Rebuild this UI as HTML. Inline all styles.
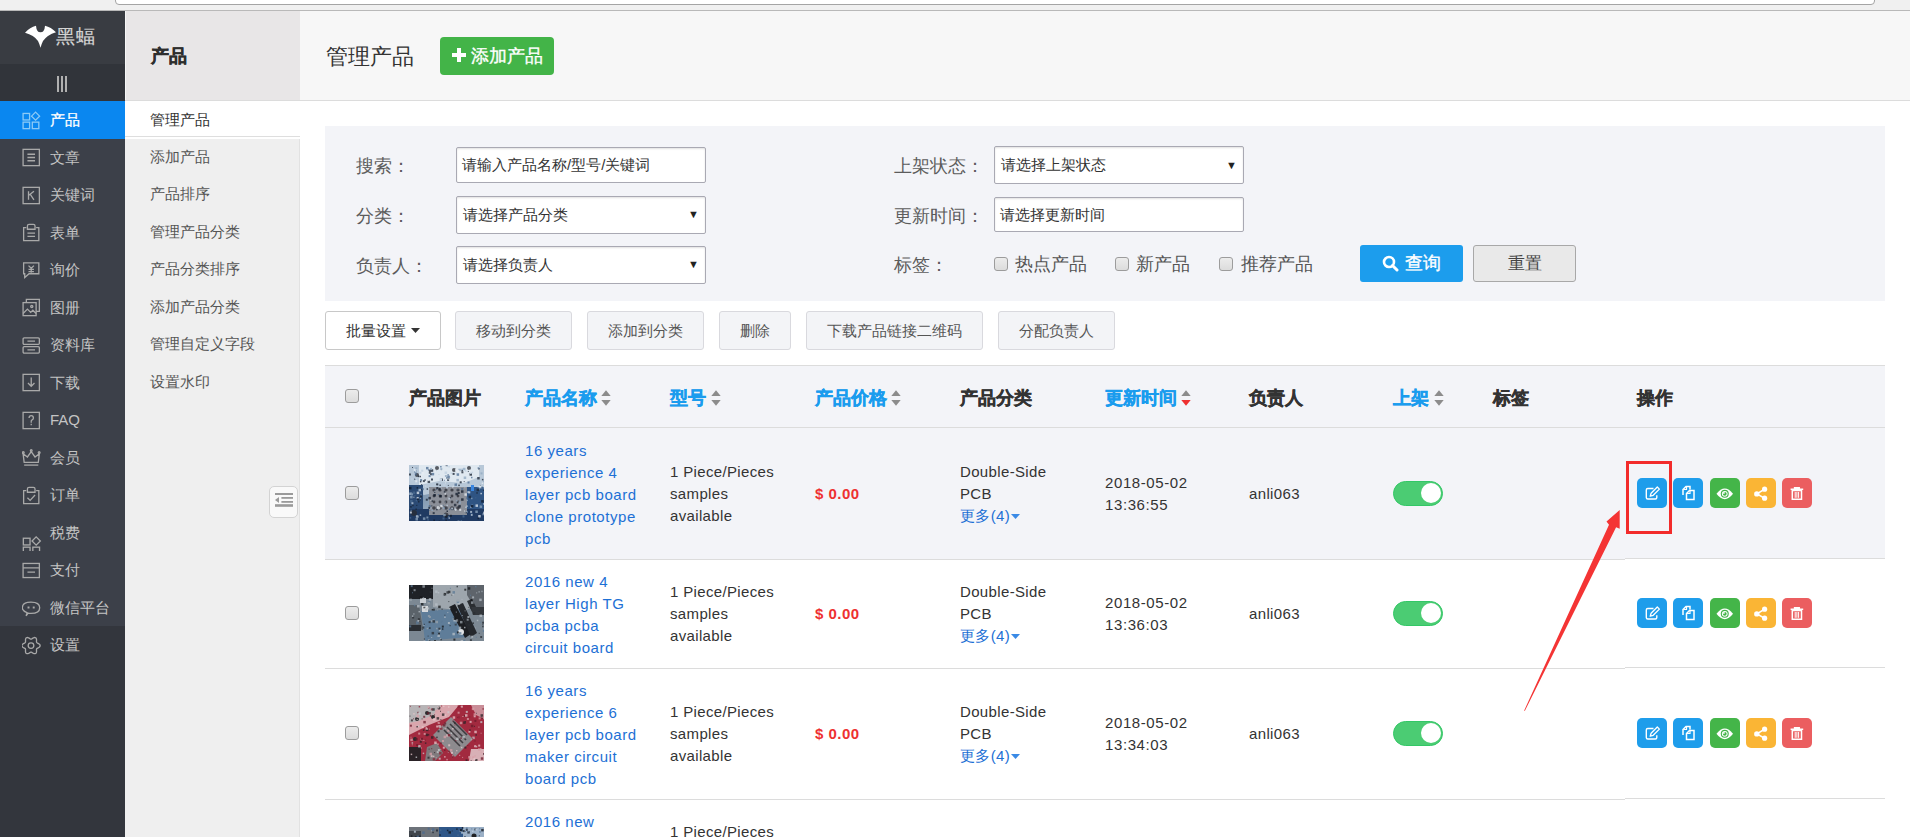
<!DOCTYPE html>
<html><head><meta charset="utf-8">
<style>
*{box-sizing:border-box;margin:0;padding:0}
html,body{width:1910px;height:837px;overflow:hidden;background:#fff;font-family:"Liberation Sans",sans-serif;color:#333}
.abs{position:absolute}
#topbar{left:0;top:0;width:1910px;height:10px;background:#f0f0f0}
#topinput{left:115px;top:-6px;width:1760px;height:11px;background:#fff;border:1px solid #a4a4a4;border-radius:0 0 4px 4px}
#topline{left:0;top:10px;width:1910px;height:1px;background:#b9b9b9}
#side{left:0;top:11px;width:125px;height:826px;background:#33363d}
#logo{left:0;top:11px;width:125px;height:53px;background:#393c42}
#tog{left:0;top:64px;width:125px;height:37px;background:#31343a}
#menu{left:0;top:101px;width:125px;height:525px;background:#3c4049}
.mi{position:absolute;left:0;width:125px;height:37.5px;overflow:hidden;color:#c4c4c4;font-size:15px;line-height:37.5px}
.mi span{position:absolute;left:50px;top:0}
.mi svg{position:absolute;left:22px;top:9.5px;color:#a9a9a9}
.mi.act svg{color:#8ccaf6}
.mi.act{background:#0a87f0;color:#fff;-webkit-text-stroke:.3px}
#sub{left:125px;top:11px;width:175px;height:826px;background:#efefef;border-right:1px solid #e2e2e2}
#subhead{left:125px;top:11px;width:175px;height:89px;background:#e8e6e7;border-left:1px solid #f6f6f6}
#subhead b{position:absolute;left:24.5px;top:33.5px;font-size:17.5px;line-height:22px;color:#2e2e2e;-webkit-text-stroke:.4px}
#mainhead{left:300px;top:11px;width:1610px;height:89px;background:#f7f7f7}
#headline{left:125px;top:100px;width:1785px;height:1px;background:#dcdcdc}
#mainwhite{left:300px;top:101px;width:1610px;height:736px;background:#fff}
.si{position:absolute;left:125px;width:175px;height:37.5px;font-size:15px;line-height:37.5px;color:#555;padding-left:25px}
.si.act{background:#fff;color:#333;width:176px}
#subline{left:125px;top:136px;width:175px;height:1px;background:#dedede}

.lbl{position:absolute;font-size:17.5px;line-height:24px;color:#5c5c5c}
.inp{position:absolute;width:250px;height:36px;background:#fff;border:1px solid #a9a9b3;border-radius:2px;box-shadow:inset 0 1px 2px rgba(0,0,0,.12);font-size:15px;line-height:34px;padding-left:5px;color:#333}
.inp i{position:absolute;right:6px;top:0;font-style:normal;font-size:11px;color:#222}
.cb{position:absolute;width:14px;height:14px;border:1px solid #9c9c9c;border-radius:3px;background:linear-gradient(#ececec,#dcdcdc)}
.cbl{position:absolute;font-size:17.5px;line-height:24px;color:#555}
.bb{position:absolute;top:311px;height:39px;border:1px solid #d9d9de;border-radius:3px;background:#f3f4f7;font-size:15px;line-height:37px;text-align:center;color:#555}

.th{position:absolute;top:386px;font-size:17.5px;line-height:24px;font-weight:bold;color:#333;-webkit-text-stroke:.45px}
.th.bl{color:#1a9cee}
.srt{position:absolute;top:390px}
.tl.tm{letter-spacing:.6px}
.tl{position:absolute;font-size:15px;line-height:22px;color:#333;letter-spacing:.35px;white-space:nowrap}
.nm{color:#1d70d5;letter-spacing:.55px;margin-top:1px}
.pr{position:absolute;font-size:15px;line-height:22px;color:#ee3131;font-weight:bold;letter-spacing:.5px}
.more{color:#1d70d5}
.tg{position:absolute;left:1393px;width:50px;height:25px;border-radius:13px;background:#4bcc73;border:1.5px solid #33c766}
.tg:after{content:"";position:absolute;right:1px;top:1px;width:20px;height:20px;border-radius:50%;background:#fff}
.ab{position:absolute;width:30px;height:30px;border-radius:5px}
.ab svg{position:absolute;left:0;top:0}
.rowline{position:absolute;left:325px;width:1560px;height:1px;background:#dcdcdc}
.pic{position:absolute;left:409px;width:75px;height:56px}
</style></head><body>
<div class="abs" id="topbar"></div>
<div class="abs" id="topinput"></div>
<div class="abs" id="topline"></div>

<div class="abs" id="side"></div>
<div class="abs" id="logo"></div>
<div class="abs" id="tog"></div>
<div class="abs" id="menu"></div>
<div class="abs" style="left:25px;top:24px"><svg width="32" height="25" viewBox="0 0 32 25"><path fill="#fff" d="M0 8.7 Q5 3 11 1.7 Q11.5 8.3 15.5 8.3 Q19.5 8.3 20 1.7 Q26 3 31 8.2 Q22 11 18 17 Q16.5 20 15.5 23.7 Q14.5 20 13 17 Q9 11 0 8.7Z"/></svg></div>
<div class="abs" style="left:56px;top:24.5px;font-size:18.5px;line-height:24px;color:#d4d4d4;letter-spacing:.5px;-webkit-text-stroke:.2px">黑蝠</div>
<div class="abs" style="left:57px;top:76px;width:1.6px;height:16px;background:#b0b0b0"></div>
<div class="abs" style="left:61px;top:76px;width:1.6px;height:16px;background:#b0b0b0"></div>
<div class="abs" style="left:65px;top:76px;width:1.6px;height:16px;background:#b0b0b0"></div>
<div class="mi act" style="top:101.0px"><svg width="19" height="19" viewBox="0 0 17.5 17"><g fill="none" stroke="currentColor" stroke-width="1.2"><rect x="1" y="2" width="6" height="6"/><path d="M12.5 0.8 L16.2 4.5 L12.5 8.2 L8.8 4.5Z"/><rect x="1" y="10" width="6" height="6"/><rect x="9.5" y="10" width="6" height="6"/></g></svg><span>产品</span></div>
<div class="mi" style="top:138.5px"><svg width="19" height="19" viewBox="0 0 17.5 17"><g fill="none" stroke="currentColor" stroke-width="1.2"><rect x="1" y="1" width="15" height="15"/><path d="M5 5.5h7M5 8.5h7M5 11.5h7"/></g></svg><span>文章</span></div>
<div class="mi" style="top:176.0px"><svg width="19" height="19" viewBox="0 0 17.5 17"><g fill="none" stroke="currentColor" stroke-width="1.2"><rect x="1" y="1" width="15" height="15"/><path d="M6 4.5v8M6 8.5l5-4M7.5 7.3l3.5 5.2"/></g></svg><span>关键词</span></div>
<div class="mi" style="top:213.5px"><svg width="19" height="19" viewBox="0 0 17.5 17"><g fill="none" stroke="currentColor" stroke-width="1.2"><path d="M4 4H1.5v12h14V4H13"/><path d="M5 5.5V2.5q0-1.5 1.5-1.5h4q1.5 0 1.5 1.5v3z"/><path d="M5 9h7M5 12h7"/></g></svg><span>表单</span></div>
<div class="mi" style="top:251.0px"><svg width="19" height="19" viewBox="0 0 17.5 17"><g fill="none" stroke="currentColor" stroke-width="1.2"><path d="M1.5 1.5h14v10h-9l-4 3.5v-3.5h-1z"/><path d="M6 4l2.5 2.5L11 4M8.5 6.5v4M6 7.5h5M6 9.5h5"/></g></svg><span>询价</span></div>
<div class="mi" style="top:288.5px"><svg width="19" height="19" viewBox="0 0 17.5 17"><g fill="none" stroke="currentColor" stroke-width="1.2"><path d="M4 4V1h12v11h-3"/><rect x="1" y="4" width="12" height="12"/><path d="M1 14l4-4 3 3 2-2 3 3"/><circle cx="9" cy="7.5" r="1"/></g></svg><span>图册</span></div>
<div class="mi" style="top:326.0px"><svg width="19" height="19" viewBox="0 0 17.5 17"><g fill="none" stroke="currentColor" stroke-width="1.2"><rect x="1" y="1.5" width="15" height="6" rx="1"/><rect x="1" y="9.5" width="15" height="6" rx="1"/><path d="M5 4.5h7M5 12.5h7"/></g></svg><span>资料库</span></div>
<div class="mi" style="top:363.5px"><svg width="19" height="19" viewBox="0 0 17.5 17"><g fill="none" stroke="currentColor" stroke-width="1.2"><rect x="1" y="1" width="15" height="15"/><path d="M8.5 4v8M5.5 9l3 3 3-3"/></g></svg><span>下载</span></div>
<div class="mi" style="top:401.0px"><svg width="19" height="19" viewBox="0 0 17.5 17"><g fill="none" stroke="currentColor" stroke-width="1.2"><rect x="1" y="1" width="15" height="15"/><path d="M6.5 6.3q0-2.3 2-2.3t2 2.1q0 1.2-1.2 1.8t-.8 1.8v.8M8.5 11.5v1.3"/></g></svg><span>FAQ</span></div>
<div class="mi" style="top:438.5px"><svg width="19" height="19" viewBox="0 0 17.5 17"><g fill="none" stroke="currentColor" stroke-width="1.2"><path d="M2 13L1 5l4 3 3.5-5 3.5 5 4-3-1 8z"/><path d="M2 15.5h13"/><circle cx="1.2" cy="4" r=".8"/><circle cx="8.5" cy="2" r=".8"/><circle cx="15.8" cy="4" r=".8"/></g></svg><span>会员</span></div>
<div class="mi" style="top:476.0px"><svg width="19" height="19" viewBox="0 0 17.5 17"><g fill="none" stroke="currentColor" stroke-width="1.2"><path d="M4 4H1.5v12h14V4H13"/><path d="M5 5.5V2.5q0-1.5 1.5-1.5h4q1.5 0 1.5 1.5v3z"/><path d="M5 10.5l2.5 2.5 4.5-5"/></g></svg><span>订单</span></div>
<div class="mi" style="top:513.5px"><svg width="20" height="19" viewBox="0 0 17.5 17" style="top:22px"><g fill="none" stroke="currentColor" stroke-width="1.2"><rect x="1" y="2" width="6" height="6"/><path d="M12.5 0.8 L16.2 4.5 L12.5 8.2 L8.8 4.5Z"/><rect x="1" y="10" width="6" height="6"/><rect x="9.5" y="10" width="6" height="6"/></g></svg><span>税费</span></div>
<div class="mi" style="top:551.0px"><svg width="19" height="19" viewBox="0 0 17.5 17"><g fill="none" stroke="currentColor" stroke-width="1.2"><rect x="1" y="2" width="15" height="13"/><path d="M1 6h15M5 10h7"/></g></svg><span>支付</span></div>
<div class="mi" style="top:588.5px"><svg width="19" height="19" viewBox="0 0 17.5 17"><g fill="none" stroke="currentColor" stroke-width="1.2"><path d="M3.8 16.3 L4.6 13.2 Q0.3 11.6 0.3 8.8 Q0.3 3.6 8.3 3.6 Q16.3 3.6 16.3 8.8 Q16.3 14 8.3 14 Q6.8 14 5.6 13.7 Z"/><rect x="5.1" y="7.6" width="1.8" height="1.8" fill="currentColor" stroke="none"/><rect x="9.9" y="7.6" width="1.8" height="1.8" fill="currentColor" stroke="none"/></g></svg><span>微信平台</span></div>
<div class="mi" style="top:626.0px"><svg width="19" height="19" viewBox="0 0 17.5 17"><g fill="none" stroke="currentColor" stroke-width="1.2"><path d="M8.30 2.60 L8.62 2.55 L8.95 2.40 L9.32 2.19 L9.72 1.92 L10.16 1.65 L10.64 1.40 L11.13 1.22 L11.62 1.14 L12.09 1.17 L12.50 1.33 L12.84 1.60 L13.10 1.99 L13.27 2.46 L13.37 2.97 L13.39 3.51 L13.38 4.03 L13.35 4.51 L13.34 4.94 L13.38 5.30 L13.50 5.60 L13.70 5.85 L13.99 6.07 L14.36 6.27 L14.79 6.49 L15.25 6.74 L15.71 7.03 L16.11 7.36 L16.43 7.75 L16.63 8.16 L16.70 8.60 L16.63 9.04 L16.43 9.45 L16.11 9.84 L15.71 10.17 L15.25 10.46 L14.79 10.71 L14.36 10.93 L13.99 11.13 L13.70 11.35 L13.50 11.60 L13.38 11.90 L13.34 12.26 L13.35 12.69 L13.38 13.17 L13.39 13.69 L13.37 14.23 L13.27 14.74 L13.10 15.21 L12.84 15.60 L12.50 15.87 L12.09 16.03 L11.62 16.06 L11.13 15.98 L10.64 15.80 L10.16 15.55 L9.72 15.28 L9.32 15.01 L8.95 14.80 L8.62 14.65 L8.30 14.60 L7.98 14.65 L7.65 14.80 L7.28 15.01 L6.88 15.28 L6.44 15.55 L5.96 15.80 L5.47 15.98 L4.98 16.06 L4.51 16.03 L4.10 15.87 L3.76 15.60 L3.50 15.21 L3.33 14.74 L3.23 14.23 L3.21 13.69 L3.22 13.17 L3.25 12.69 L3.26 12.26 L3.22 11.90 L3.10 11.60 L2.90 11.35 L2.61 11.13 L2.24 10.93 L1.81 10.71 L1.35 10.46 L0.89 10.17 L0.49 9.84 L0.17 9.45 L-0.03 9.04 L-0.10 8.60 L-0.03 8.16 L0.17 7.75 L0.49 7.36 L0.89 7.03 L1.35 6.74 L1.81 6.49 L2.24 6.27 L2.61 6.07 L2.90 5.85 L3.10 5.60 L3.22 5.30 L3.26 4.94 L3.25 4.51 L3.22 4.03 L3.21 3.51 L3.23 2.97 L3.33 2.46 L3.50 1.99 L3.76 1.60 L4.10 1.33 L4.51 1.17 L4.98 1.14 L5.47 1.22 L5.96 1.40 L6.44 1.65 L6.88 1.92 L7.28 2.19 L7.65 2.40 L7.98 2.55 L8.30 2.60Z"/><circle cx="8.3" cy="8.6" r="2.6"/></g></svg><span>设置</span></div>

<div class="abs" id="sub"></div>
<div class="abs" id="subhead"><b>产品</b></div>
<div class="abs" id="mainhead"></div>
<div class="abs" id="mainwhite"></div>
<div class="abs" id="headline"></div>

<div class="si act" style="top:101px">管理产品</div>
<div class="abs" id="subline"></div>
<div class="si" style="top:137.5px">添加产品</div>
<div class="si" style="top:175px">产品排序</div>
<div class="si" style="top:212.5px">管理产品分类</div>
<div class="si" style="top:250px">产品分类排序</div>
<div class="si" style="top:287.5px">添加产品分类</div>
<div class="si" style="top:325px">管理自定义字段</div>
<div class="si" style="top:362.5px">设置水印</div>


<div class="abs" style="left:326px;top:43px;font-size:22px;line-height:28px;color:#333">管理产品</div>
<div class="abs" style="left:440px;top:37px;width:114px;height:38px;background:#43b448;border-radius:4px"></div>
<div class="abs" style="left:452px;top:48px"><svg width="14" height="14" viewBox="0 0 14 14"><path fill="#fff" d="M5 0h4v5h5v4H9v5H5V9H0V5h5z"/></svg></div>
<div class="abs" style="left:471px;top:44px;font-size:18px;line-height:24px;color:#fff;-webkit-text-stroke:.35px">添加产品</div>

<div class="abs" style="left:325px;top:126px;width:1560px;height:175px;background:#f3f4f8"></div>
<div class="lbl" style="left:356px;top:154px">搜索：</div>
<div class="lbl" style="left:356px;top:204px">分类：</div>
<div class="lbl" style="left:356px;top:254px">负责人：</div>
<div class="inp" style="left:456px;top:147px;height:36px">请输入产品名称/型号/关键词</div>
<div class="inp" style="left:456px;top:196px;height:37.5px;line-height:35.5px;padding-left:6px">请选择产品分类<i>▼</i></div>
<div class="inp" style="left:456px;top:246px;height:37.5px;line-height:35.5px;padding-left:6px">请选择负责人<i>▼</i></div>
<div class="lbl" style="left:894px;top:154px">上架状态：</div>
<div class="lbl" style="left:894px;top:204px">更新时间：</div>
<div class="lbl" style="left:894px;top:253px">标签：</div>
<div class="inp" style="left:994px;top:146px;height:38px;line-height:36px;padding-left:6px">请选择上架状态<i>▼</i></div>
<div class="inp" style="left:994px;top:197px;height:35px;line-height:33px">请选择更新时间</div>
<div class="cb" style="left:994px;top:257px"></div><div class="cbl" style="left:1015px;top:252px">热点产品</div>
<div class="cb" style="left:1115px;top:257px"></div><div class="cbl" style="left:1136px;top:252px">新产品</div>
<div class="cb" style="left:1219px;top:257px"></div><div class="cbl" style="left:1241px;top:252px">推荐产品</div>
<div class="abs" style="left:1360px;top:245px;width:103px;height:37px;background:#1c9ded;border-radius:3px"></div>
<div class="abs" style="left:1382px;top:255px"><svg width="17" height="17" viewBox="0 0 17 17"><circle cx="7" cy="7" r="5" fill="none" stroke="#fff" stroke-width="2.6"/><path d="M10.5 10.5l4.5 4.5" stroke="#fff" stroke-width="3" stroke-linecap="round"/></svg></div>
<div class="abs" style="left:1405px;top:251px;font-size:18px;line-height:24px;color:#fff;-webkit-text-stroke:.35px">查询</div>
<div class="abs" style="left:1473px;top:245px;width:103px;height:37px;background:#e9e9e9;border:1px solid #a8a8a8;border-radius:3px;font-size:17px;line-height:35px;text-align:center;color:#444">重置</div>

<div class="bb" style="left:325px;width:116px;background:#fff;border-color:#c8c8c8;color:#333">批量设置 <svg width="9" height="6" viewBox="0 0 9 6" style="vertical-align:2px"><path d="M0 0h9L4.5 5z" fill="#333"/></svg></div>
<div class="bb" style="left:455px;width:117px">移动到分类</div>
<div class="bb" style="left:587px;width:117px">添加到分类</div>
<div class="bb" style="left:719px;width:72px">删除</div>
<div class="bb" style="left:806px;width:177px">下载产品链接二维码</div>
<div class="bb" style="left:998px;width:117px">分配负责人</div>

<div class="abs" style="left:325px;top:365px;width:1560px;height:63px;background:#f3f4f8;border-top:1px solid #dcdcdc;border-bottom:1px solid #dcdcdc"></div>
<div class="cb" style="left:345px;top:389px"></div>
<div class="th" style="left:409px">产品图片</div>
<div class="th bl" style="left:525px">产品名称</div><svg class="srt" style="left:600.5px" width="10" height="16" viewBox="0 0 10 16"><path d="M0.3 6L5 0.3 9.7 6z" fill="#8c8c8c"/><path d="M0.3 10L5 15.7 9.7 10z" fill="#8c8c8c"/></svg>
<div class="th bl" style="left:670px">型号</div><svg class="srt" style="left:711px" width="10" height="16" viewBox="0 0 10 16"><path d="M0.3 6L5 0.3 9.7 6z" fill="#8c8c8c"/><path d="M0.3 10L5 15.7 9.7 10z" fill="#8c8c8c"/></svg>
<div class="th bl" style="left:815px">产品价格</div><svg class="srt" style="left:891px" width="10" height="16" viewBox="0 0 10 16"><path d="M0.3 6L5 0.3 9.7 6z" fill="#8c8c8c"/><path d="M0.3 10L5 15.7 9.7 10z" fill="#8c8c8c"/></svg>
<div class="th" style="left:960px">产品分类</div>
<div class="th bl" style="left:1105px">更新时间</div><svg class="srt" style="left:1181px" width="10" height="16" viewBox="0 0 10 16"><path d="M0.3 6L5 0.3 9.7 6z" fill="#8c8c8c"/><path d="M0.3 10L5 15.7 9.7 10z" fill="#ee3030"/></svg>
<div class="th" style="left:1249px">负责人</div>
<div class="th bl" style="left:1393px">上架</div><svg class="srt" style="left:1433.5px" width="10" height="16" viewBox="0 0 10 16"><path d="M0.3 6L5 0.3 9.7 6z" fill="#8c8c8c"/><path d="M0.3 10L5 15.7 9.7 10z" fill="#8c8c8c"/></svg>
<div class="th" style="left:1493px">标签</div>
<div class="th" style="left:1637px">操作</div>
<div class="abs" style="left:325px;top:428px;width:1300px;height:131px;background:#f3f4f8"></div>
<div class="abs" style="left:1625px;top:428px;width:260px;height:130px;background:#f3f4f8"></div>
<div class="rowline" style="top:559px;width:1300px"></div><div class="rowline" style="top:558px;left:1625px;width:260px"></div>
<div class="rowline" style="top:668px;width:1300px"></div><div class="rowline" style="top:667px;left:1625px;width:260px"></div>
<div class="rowline" style="top:799px;width:1300px"></div><div class="rowline" style="top:798px;left:1625px;width:260px"></div>
<div class="cb" style="left:345px;top:486px"></div>
<div class="pic pica" style="overflow:hidden;top:465.0px"><svg width="75" height="56" viewBox="0 0 75 56"><defs><linearGradient id="ga" x1="0" y1="0" x2="1" y2="1"><stop offset="0" stop-color="#5d7896"/><stop offset=".5" stop-color="#8ea4bb"/><stop offset="1" stop-color="#1f3a60"/></linearGradient></defs>
<rect width="75" height="56" fill="url(#ga)"/>
<path d="M0 0h75v22l-10 4-20-2-30 6-15-6z" fill="#b8c8d8"/>
<path d="M10 0h60v12l-15 6-25-2-20 4z" fill="#dfe8f0"/>
<rect x="0" y="20" width="14" height="36" fill="#2b4a74"/>
<rect x="58" y="22" width="17" height="34" fill="#2f5483"/>
<rect x="0" y="44" width="75" height="12" fill="#203a62"/>
<rect x="20" y="22" width="38" height="28" fill="#8b8f98"/>
<g fill="#2a2c33" opacity=".75">
<circle cx="25" cy="25" r="1.6"/><circle cx="31" cy="25" r="1.6"/><circle cx="37" cy="25" r="1.6"/><circle cx="43" cy="25" r="1.6"/><circle cx="49" cy="25" r="1.6"/>
<circle cx="25" cy="31" r="1.4"/><circle cx="31" cy="31" r="1.4"/><circle cx="37" cy="31" r="1.4"/><circle cx="43" cy="31" r="1.4"/><circle cx="49" cy="31" r="1.4"/>
<circle cx="25" cy="37" r="1.4"/><circle cx="31" cy="37" r="1.4"/><circle cx="37" cy="37" r="1.4"/><circle cx="43" cy="37" r="1.4"/><circle cx="49" cy="37" r="1.4"/>
<circle cx="25" cy="43" r="1.8"/><circle cx="31" cy="43" r="1.8"/><circle cx="37" cy="43" r="1.8"/><circle cx="43" cy="43" r="1.8"/><circle cx="49" cy="43" r="1.8"/>
<circle cx="28" cy="3" r="2"/><circle cx="45" cy="5" r="2"/><circle cx="60" cy="3" r="2"/><circle cx="8" cy="10" r="2"/><circle cx="5" cy="48" r="3"/><circle cx="37" cy="50" r="2.5"/>
</g>
<rect x="62" y="20" width="3" height="6" fill="#3a86e0"/>
<g opacity=".75"><rect x="24.3" y="8.4" width="1" height="1" fill="#90a8c0"/><rect x="5.4" y="30.0" width="1" height="1" fill="#4a6a90"/><rect x="68.2" y="12.0" width="2.5" height="2.5" fill="#1a2433"/><rect x="31.4" y="13.5" width="2.5" height="2.5" fill="#0f1a2a"/><rect x="4.4" y="31.7" width="1" height="1" fill="#e8eef4"/><rect x="43.3" y="22.2" width="1" height="1" fill="#e8eef4"/><rect x="41.7" y="7.5" width="1.5" height="1.5" fill="#c0d0e0"/><rect x="40.6" y="32.0" width="1.5" height="1.5" fill="#0f1a2a"/><rect x="7.7" y="32.0" width="2" height="2" fill="#e8eef4"/><rect x="7.3" y="39.9" width="1" height="1" fill="#0f1a2a"/><rect x="46.4" y="27.8" width="2.5" height="2.5" fill="#0f1a2a"/><rect x="58.3" y="26.1" width="2" height="2" fill="#c0d0e0"/><rect x="22.5" y="44.5" width="1.5" height="1.5" fill="#90a8c0"/><rect x="6.1" y="16.8" width="2" height="2" fill="#c0d0e0"/><rect x="54.7" y="16.1" width="1" height="1" fill="#1a2433"/><rect x="38.4" y="9.2" width="1.5" height="1.5" fill="#4a6a90"/><rect x="70.0" y="23.6" width="1" height="1" fill="#90a8c0"/><rect x="57.3" y="32.1" width="2" height="2" fill="#4a6a90"/><rect x="52.1" y="33.3" width="2.5" height="2.5" fill="#0f1a2a"/><rect x="5.2" y="5.2" width="2.5" height="2.5" fill="#4a6a90"/><rect x="52.3" y="3.6" width="2" height="2" fill="#90a8c0"/><rect x="48.5" y="55.6" width="2" height="2" fill="#c0d0e0"/><rect x="53.7" y="49.7" width="1" height="1" fill="#4a6a90"/><rect x="70.5" y="19.9" width="1" height="1" fill="#0f1a2a"/><rect x="37.0" y="12.2" width="1.5" height="1.5" fill="#4a6a90"/><rect x="55.4" y="22.3" width="1" height="1" fill="#c0d0e0"/><rect x="12.5" y="22.5" width="1.5" height="1.5" fill="#4a6a90"/><rect x="61.4" y="48.4" width="2.5" height="2.5" fill="#4a6a90"/><rect x="74.0" y="38.2" width="1.5" height="1.5" fill="#c0d0e0"/><rect x="11.3" y="9.9" width="1.5" height="1.5" fill="#e8eef4"/><rect x="0.9" y="46.5" width="2" height="2" fill="#e8eef4"/><rect x="21.1" y="8.2" width="2" height="2" fill="#0f1a2a"/><rect x="45.7" y="17.8" width="1" height="1" fill="#e8eef4"/><rect x="34.2" y="48.8" width="2.5" height="2.5" fill="#90a8c0"/><rect x="29.9" y="22.1" width="2.5" height="2.5" fill="#c0d0e0"/><rect x="4.7" y="3.8" width="2.5" height="2.5" fill="#e8eef4"/><rect x="12.2" y="19.0" width="1" height="1" fill="#1a2433"/><rect x="0.0" y="8.5" width="2" height="2" fill="#1a2433"/><rect x="46.0" y="3.9" width="2.5" height="2.5" fill="#e8eef4"/><rect x="11.1" y="14.1" width="2" height="2" fill="#4a6a90"/><rect x="35.6" y="6.5" width="2.5" height="2.5" fill="#c0d0e0"/><rect x="36.0" y="17.5" width="1" height="1" fill="#e8eef4"/><rect x="56.2" y="41.5" width="1.5" height="1.5" fill="#c0d0e0"/><rect x="38.7" y="11.5" width="2" height="2" fill="#0f1a2a"/><rect x="11.0" y="30.4" width="2" height="2" fill="#1a2433"/><rect x="73.4" y="48.3" width="2" height="2" fill="#90a8c0"/><rect x="38.9" y="50.9" width="1.5" height="1.5" fill="#4a6a90"/><rect x="39.9" y="43.6" width="1.5" height="1.5" fill="#4a6a90"/><rect x="46.0" y="44.2" width="1.5" height="1.5" fill="#e8eef4"/><rect x="61.4" y="41.4" width="1.5" height="1.5" fill="#e8eef4"/><rect x="38.8" y="19.9" width="1" height="1" fill="#1a2433"/><rect x="59.3" y="26.4" width="2" height="2" fill="#e8eef4"/><rect x="33.5" y="52.5" width="2" height="2" fill="#4a6a90"/><rect x="6.0" y="5.7" width="1.5" height="1.5" fill="#c0d0e0"/><rect x="25.3" y="27.0" width="1" height="1" fill="#0f1a2a"/><rect x="36.0" y="36.6" width="1" height="1" fill="#90a8c0"/><rect x="62.6" y="6.7" width="1.5" height="1.5" fill="#c0d0e0"/><rect x="35.9" y="10.0" width="2" height="2" fill="#90a8c0"/><rect x="6.5" y="53.0" width="2.5" height="2.5" fill="#90a8c0"/><rect x="34.7" y="41.6" width="1.5" height="1.5" fill="#1a2433"/><rect x="12.8" y="7.1" width="2.5" height="2.5" fill="#e8eef4"/><rect x="60.5" y="8.2" width="2.5" height="2.5" fill="#0f1a2a"/><rect x="49.3" y="19.6" width="1.5" height="1.5" fill="#0f1a2a"/><rect x="1.6" y="44.8" width="1" height="1" fill="#90a8c0"/><rect x="39.5" y="52.3" width="1.5" height="1.5" fill="#c0d0e0"/><rect x="62.0" y="11.8" width="1.5" height="1.5" fill="#4a6a90"/><rect x="22.0" y="13.5" width="2" height="2" fill="#0f1a2a"/><rect x="19.5" y="23.5" width="1" height="1" fill="#e8eef4"/><rect x="68.3" y="19.8" width="2.5" height="2.5" fill="#c0d0e0"/><rect x="62.0" y="49.2" width="1.5" height="1.5" fill="#e8eef4"/><rect x="39.3" y="1.0" width="1.5" height="1.5" fill="#c0d0e0"/><rect x="45.6" y="43.5" width="1.5" height="1.5" fill="#e8eef4"/><rect x="10.6" y="34.7" width="1" height="1" fill="#1a2433"/><rect x="24.4" y="29.0" width="2.5" height="2.5" fill="#0f1a2a"/><rect x="58.8" y="5.9" width="1" height="1" fill="#0f1a2a"/><rect x="18.6" y="15.5" width="2.5" height="2.5" fill="#1a2433"/><rect x="42.1" y="42.6" width="2.5" height="2.5" fill="#1a2433"/><rect x="24.4" y="54.5" width="1.5" height="1.5" fill="#0f1a2a"/><rect x="52.0" y="25.3" width="2.5" height="2.5" fill="#0f1a2a"/><rect x="38.1" y="13.9" width="2" height="2" fill="#0f1a2a"/><rect x="69.2" y="50.0" width="2.5" height="2.5" fill="#e8eef4"/><rect x="10.3" y="6.8" width="2" height="2" fill="#c0d0e0"/><rect x="5.4" y="13.5" width="1.5" height="1.5" fill="#1a2433"/><rect x="50.2" y="43.9" width="2" height="2" fill="#e8eef4"/><rect x="10.7" y="49.4" width="1.5" height="1.5" fill="#c0d0e0"/><rect x="56.0" y="5.3" width="1.5" height="1.5" fill="#c0d0e0"/><rect x="74.2" y="46.6" width="2.5" height="2.5" fill="#e8eef4"/><rect x="74.6" y="22.6" width="1.5" height="1.5" fill="#c0d0e0"/><rect x="26.7" y="5.2" width="1" height="1" fill="#4a6a90"/><rect x="25.3" y="25.7" width="1" height="1" fill="#90a8c0"/><rect x="28.8" y="29.0" width="1" height="1" fill="#4a6a90"/><rect x="8.5" y="51.4" width="1" height="1" fill="#e8eef4"/><rect x="6.3" y="15.2" width="2" height="2" fill="#e8eef4"/><rect x="56.7" y="45.9" width="2" height="2" fill="#90a8c0"/><rect x="30.4" y="30.0" width="2.5" height="2.5" fill="#0f1a2a"/><rect x="52.5" y="5.0" width="1.5" height="1.5" fill="#1a2433"/><rect x="31.9" y="4.1" width="1" height="1" fill="#1a2433"/><rect x="60.1" y="4.7" width="1" height="1" fill="#e8eef4"/><rect x="19.8" y="6.8" width="2" height="2" fill="#1a2433"/><rect x="74.6" y="23.4" width="1.5" height="1.5" fill="#4a6a90"/><rect x="3.2" y="39.7" width="1.5" height="1.5" fill="#1a2433"/><rect x="19.6" y="10.1" width="2" height="2" fill="#4a6a90"/><rect x="39.8" y="11.5" width="1.5" height="1.5" fill="#c0d0e0"/><rect x="20.3" y="45.0" width="1" height="1" fill="#4a6a90"/><rect x="1.2" y="41.1" width="1.5" height="1.5" fill="#0f1a2a"/><rect x="38.6" y="13.8" width="1" height="1" fill="#c0d0e0"/><rect x="49.4" y="36.4" width="2.5" height="2.5" fill="#90a8c0"/><rect x="40.9" y="49.8" width="2" height="2" fill="#0f1a2a"/><rect x="51.6" y="55.0" width="1.5" height="1.5" fill="#4a6a90"/><rect x="62.4" y="39.6" width="1.5" height="1.5" fill="#90a8c0"/><rect x="30.4" y="19.5" width="1.5" height="1.5" fill="#1a2433"/><rect x="1.1" y="35.0" width="2.5" height="2.5" fill="#4a6a90"/><rect x="12.2" y="4.7" width="2" height="2" fill="#c0d0e0"/><rect x="44.9" y="38.8" width="2.5" height="2.5" fill="#1a2433"/><rect x="13.9" y="15.1" width="2" height="2" fill="#1a2433"/><rect x="27.3" y="18.4" width="2" height="2" fill="#0f1a2a"/><rect x="18.3" y="54.1" width="1.5" height="1.5" fill="#4a6a90"/><rect x="26.7" y="0.1" width="1" height="1" fill="#c0d0e0"/><rect x="35.6" y="28.2" width="1.5" height="1.5" fill="#e8eef4"/><rect x="37.9" y="0.3" width="1" height="1" fill="#4a6a90"/><rect x="10.8" y="32.9" width="1" height="1" fill="#c0d0e0"/><rect x="22.5" y="35.3" width="1.5" height="1.5" fill="#1a2433"/><rect x="49.3" y="40.1" width="2.5" height="2.5" fill="#0f1a2a"/><rect x="57.3" y="40.4" width="1.5" height="1.5" fill="#c0d0e0"/><rect x="21.3" y="34.6" width="1" height="1" fill="#e8eef4"/><rect x="61.9" y="40.0" width="2.5" height="2.5" fill="#0f1a2a"/><rect x="55.0" y="45.5" width="1" height="1" fill="#e8eef4"/><rect x="62.0" y="32.7" width="1.5" height="1.5" fill="#90a8c0"/><rect x="6.4" y="2.3" width="2" height="2" fill="#90a8c0"/><rect x="72.0" y="21.1" width="1" height="1" fill="#c0d0e0"/><rect x="47.1" y="35.1" width="1.5" height="1.5" fill="#90a8c0"/><rect x="36.7" y="0.2" width="1" height="1" fill="#1a2433"/><rect x="49.4" y="3.7" width="2.5" height="2.5" fill="#90a8c0"/><rect x="18.9" y="4.2" width="1.5" height="1.5" fill="#4a6a90"/><rect x="54.7" y="11.5" width="2.5" height="2.5" fill="#90a8c0"/><rect x="37.0" y="21.4" width="2" height="2" fill="#c0d0e0"/><rect x="57.5" y="34.6" width="1.5" height="1.5" fill="#90a8c0"/><rect x="5.8" y="8.3" width="2" height="2" fill="#4a6a90"/><rect x="46.6" y="7.5" width="1" height="1" fill="#c0d0e0"/><rect x="36.4" y="54.5" width="1.5" height="1.5" fill="#1a2433"/><rect x="50.7" y="16.3" width="2" height="2" fill="#0f1a2a"/><rect x="34.8" y="26.1" width="1.5" height="1.5" fill="#1a2433"/><rect x="23.4" y="4.8" width="1" height="1" fill="#c0d0e0"/><rect x="21.7" y="4.3" width="2.5" height="2.5" fill="#0f1a2a"/><rect x="74.5" y="21.7" width="1" height="1" fill="#e8eef4"/><rect x="43.6" y="7.9" width="2" height="2" fill="#0f1a2a"/><rect x="71.5" y="7.4" width="2" height="2" fill="#90a8c0"/><rect x="66.5" y="39.4" width="2.5" height="2.5" fill="#e8eef4"/><rect x="67.3" y="27.2" width="1.5" height="1.5" fill="#1a2433"/><rect x="0.3" y="27.5" width="2.5" height="2.5" fill="#c0d0e0"/><rect x="22.6" y="7.9" width="2.5" height="2.5" fill="#4a6a90"/><rect x="23.7" y="47.1" width="2" height="2" fill="#1a2433"/><rect x="56.3" y="47.0" width="1.5" height="1.5" fill="#1a2433"/><rect x="53.5" y="50.5" width="2" height="2" fill="#4a6a90"/><rect x="27.9" y="22.0" width="1" height="1" fill="#0f1a2a"/><rect x="27.1" y="24.0" width="1" height="1" fill="#4a6a90"/><rect x="21.0" y="2.9" width="2" height="2" fill="#90a8c0"/><rect x="47.6" y="8.3" width="2.5" height="2.5" fill="#4a6a90"/><rect x="38.3" y="10.6" width="2.5" height="2.5" fill="#4a6a90"/><rect x="66.3" y="45.5" width="2.5" height="2.5" fill="#90a8c0"/><rect x="68.5" y="52.7" width="1.5" height="1.5" fill="#0f1a2a"/><rect x="54.0" y="2.8" width="2.5" height="2.5" fill="#90a8c0"/><rect x="33.8" y="42.1" width="2" height="2" fill="#90a8c0"/><rect x="36.4" y="51.1" width="1.5" height="1.5" fill="#0f1a2a"/><rect x="12.8" y="23.2" width="2" height="2" fill="#4a6a90"/><rect x="19.2" y="41.4" width="2" height="2" fill="#90a8c0"/><rect x="30.5" y="13.4" width="2.5" height="2.5" fill="#c0d0e0"/><rect x="9.0" y="36.0" width="1.5" height="1.5" fill="#1a2433"/><rect x="37.5" y="45.5" width="1.5" height="1.5" fill="#0f1a2a"/><rect x="34.0" y="18.6" width="2.5" height="2.5" fill="#c0d0e0"/><rect x="10.5" y="10.8" width="1.5" height="1.5" fill="#1a2433"/><rect x="25.6" y="5.1" width="2" height="2" fill="#e8eef4"/><rect x="19.4" y="31.9" width="2.5" height="2.5" fill="#1a2433"/><rect x="28.7" y="41.8" width="2.5" height="2.5" fill="#e8eef4"/><rect x="20.3" y="42.1" width="2" height="2" fill="#c0d0e0"/><rect x="43.1" y="20.2" width="1.5" height="1.5" fill="#90a8c0"/><rect x="6.9" y="50.2" width="2.5" height="2.5" fill="#c0d0e0"/><rect x="48.4" y="24.2" width="1" height="1" fill="#4a6a90"/><rect x="9.5" y="23.8" width="2.5" height="2.5" fill="#c0d0e0"/><rect x="0.0" y="21.9" width="2.5" height="2.5" fill="#0f1a2a"/><rect x="72.9" y="13.9" width="1.5" height="1.5" fill="#1a2433"/><rect x="11.6" y="29.3" width="1" height="1" fill="#90a8c0"/><rect x="70.6" y="40.4" width="2.5" height="2.5" fill="#90a8c0"/><rect x="6.4" y="43.5" width="1.5" height="1.5" fill="#1a2433"/><rect x="17.4" y="51.5" width="2" height="2" fill="#90a8c0"/><rect x="72.2" y="35.1" width="2.5" height="2.5" fill="#0f1a2a"/><rect x="52.4" y="6.3" width="2" height="2" fill="#1a2433"/><rect x="39.3" y="32.6" width="2" height="2" fill="#c0d0e0"/><rect x="16.8" y="33.7" width="2" height="2" fill="#1a2433"/><rect x="74.7" y="15.6" width="1.5" height="1.5" fill="#4a6a90"/><rect x="35.6" y="13.1" width="1" height="1" fill="#e8eef4"/><rect x="72.0" y="39.5" width="1" height="1" fill="#4a6a90"/><rect x="1.6" y="27.9" width="2.5" height="2.5" fill="#90a8c0"/><rect x="6.1" y="12.8" width="2" height="2" fill="#c0d0e0"/><rect x="17.0" y="1.9" width="2.5" height="2.5" fill="#4a6a90"/><rect x="27.2" y="22.2" width="2" height="2" fill="#1a2433"/><rect x="55.4" y="28.3" width="2.5" height="2.5" fill="#e8eef4"/><rect x="72.7" y="17.5" width="1.5" height="1.5" fill="#e8eef4"/><rect x="34.9" y="14.8" width="1" height="1" fill="#4a6a90"/><rect x="71.4" y="27.8" width="1.5" height="1.5" fill="#e8eef4"/><rect x="36.4" y="51.0" width="1.5" height="1.5" fill="#1a2433"/><rect x="69.1" y="3.0" width="1.5" height="1.5" fill="#1a2433"/><rect x="31.2" y="39.8" width="2.5" height="2.5" fill="#e8eef4"/><rect x="33.7" y="39.9" width="1" height="1" fill="#4a6a90"/><rect x="74.8" y="52.2" width="1.5" height="1.5" fill="#4a6a90"/><rect x="13.9" y="52.4" width="2.5" height="2.5" fill="#90a8c0"/><rect x="2.4" y="37.2" width="2" height="2" fill="#c0d0e0"/><rect x="73.9" y="24.8" width="1" height="1" fill="#1a2433"/><rect x="5.9" y="4.5" width="1" height="1" fill="#c0d0e0"/><rect x="42.1" y="42.5" width="2" height="2" fill="#c0d0e0"/><rect x="57.7" y="17.3" width="1" height="1" fill="#c0d0e0"/><rect x="3.7" y="26.5" width="2.5" height="2.5" fill="#4a6a90"/><rect x="14.5" y="20.4" width="1" height="1" fill="#c0d0e0"/><rect x="47.4" y="13.9" width="2.5" height="2.5" fill="#90a8c0"/><rect x="3.0" y="2.0" width="1" height="1" fill="#1a2433"/><rect x="19.3" y="41.8" width="2" height="2" fill="#0f1a2a"/><rect x="27.2" y="18.8" width="1" height="1" fill="#0f1a2a"/><rect x="19.7" y="40.1" width="2" height="2" fill="#4a6a90"/><rect x="22.3" y="40.4" width="1" height="1" fill="#0f1a2a"/><rect x="1.8" y="13.1" width="2.5" height="2.5" fill="#c0d0e0"/><rect x="71.5" y="21.6" width="2.5" height="2.5" fill="#4a6a90"/><rect x="61.1" y="7.4" width="1.5" height="1.5" fill="#c0d0e0"/><rect x="0.7" y="52.1" width="1.5" height="1.5" fill="#4a6a90"/><rect x="45.5" y="18.4" width="2.5" height="2.5" fill="#4a6a90"/><rect x="27.1" y="43.8" width="1.5" height="1.5" fill="#1a2433"/><rect x="29.4" y="9.0" width="1" height="1" fill="#c0d0e0"/><rect x="48.7" y="27.0" width="2" height="2" fill="#0f1a2a"/><rect x="12.1" y="23.9" width="1" height="1" fill="#1a2433"/><rect x="19.9" y="4.7" width="2.5" height="2.5" fill="#1a2433"/><rect x="37.4" y="39.7" width="1.5" height="1.5" fill="#c0d0e0"/><rect x="17.6" y="23.3" width="1.5" height="1.5" fill="#0f1a2a"/><rect x="56.1" y="47.4" width="1" height="1" fill="#90a8c0"/><rect x="58.5" y="16.5" width="2" height="2" fill="#4a6a90"/><rect x="28.0" y="41.3" width="2.5" height="2.5" fill="#e8eef4"/><rect x="18.6" y="13.7" width="2" height="2" fill="#e8eef4"/><rect x="66.3" y="32.4" width="1" height="1" fill="#4a6a90"/><rect x="29.7" y="55.6" width="1.5" height="1.5" fill="#0f1a2a"/><rect x="48.7" y="5.6" width="1" height="1" fill="#c0d0e0"/><rect x="7.7" y="26.6" width="2.5" height="2.5" fill="#e8eef4"/><rect x="68.6" y="2.3" width="1.5" height="1.5" fill="#4a6a90"/><rect x="8.9" y="10.6" width="1.5" height="1.5" fill="#0f1a2a"/><rect x="69.8" y="20.8" width="2.5" height="2.5" fill="#e8eef4"/><rect x="45.2" y="43.4" width="1" height="1" fill="#90a8c0"/><rect x="7.9" y="33.4" width="2" height="2" fill="#0f1a2a"/><rect x="16.3" y="20.6" width="1" height="1" fill="#e8eef4"/><rect x="15.3" y="14.3" width="1.5" height="1.5" fill="#0f1a2a"/><rect x="61.1" y="45.9" width="2" height="2" fill="#c0d0e0"/><rect x="13.9" y="17.5" width="1" height="1" fill="#e8eef4"/><rect x="59.6" y="30.7" width="2.5" height="2.5" fill="#1a2433"/><rect x="7.6" y="22.1" width="1.5" height="1.5" fill="#0f1a2a"/><rect x="47.9" y="5.1" width="2.5" height="2.5" fill="#e8eef4"/><rect x="52.2" y="22.9" width="2" height="2" fill="#4a6a90"/><rect x="31.3" y="2.9" width="2" height="2" fill="#90a8c0"/><rect x="31.1" y="1.0" width="1.5" height="1.5" fill="#4a6a90"/><rect x="29.3" y="22.7" width="2.5" height="2.5" fill="#1a2433"/><rect x="67.6" y="23.7" width="2.5" height="2.5" fill="#1a2433"/><rect x="43.3" y="20.4" width="1.5" height="1.5" fill="#e8eef4"/><rect x="1.1" y="30.9" width="2.5" height="2.5" fill="#90a8c0"/><rect x="6.7" y="34.8" width="1.5" height="1.5" fill="#4a6a90"/><rect x="10.9" y="15.9" width="1.5" height="1.5" fill="#0f1a2a"/></g></svg></div>
<div class="tl nm" style="left:525px;top:438.5px">16 years<br>experience 4<br>layer pcb board<br>clone prototype<br>pcb</div>
<div class="tl" style="left:670px;top:460.5px">1 Piece/Pieces<br>samples<br>available</div>
<div class="pr" style="left:815px;top:482.5px">$ 0.00</div>
<div class="tl" style="left:960px;top:460.5px">Double-Side<br>PCB<br><span class="more">更多(4)</span><svg width="9" height="6" viewBox="0 0 9 6" style="margin-left:1px;vertical-align:1px"><path d="M0 0h9L4.5 5z" fill="#3a8ae6"/></svg></div>
<div class="tl tm" style="left:1105px;top:471.5px">2018-05-02<br>13:36:55</div>
<div class="tl" style="left:1249px;top:482.5px">anli063</div>
<div class="tg" style="top:481.0px"></div>
<div class="ab" style="left:1637px;top:478.0px;background:#1e9deb"><svg width="30" height="30" viewBox="0 0 30 30"><path d="M16.5 10.5H10.8q-1.5 0-1.5 1.5v7.5q0 1.5 1.5 1.5h7.5q1.5 0 1.5-1.5v-2.2" fill="none" stroke="#fff" stroke-width="1.4"/><path d="M13.2 18.2l.9-3 6.2-6.2 2.1 2.1-6.2 6.2z" fill="none" stroke="#fff" stroke-width="1.3" stroke-linejoin="round"/></svg></div>
<div class="ab" style="left:1673px;top:478.0px;background:#1e9deb"><svg width="30" height="30" viewBox="0 0 30 30"><path d="M10 17V11.5l3-3h4v3" fill="none" stroke="#fff" stroke-width="1.5"/><path d="M13.5 21.5V15.5l3-3h4.5v9z" fill="none" stroke="#fff" stroke-width="1.5"/><path d="M10.5 11.5h3v-3M14 15.5h3v-3" fill="none" stroke="#fff" stroke-width="1.2"/></svg></div>
<div class="ab" style="left:1710px;top:478.0px;background:#44b549"><svg width="30" height="30" viewBox="0 0 30 30"><path d="M6.5 15.8q8.25-10.8 16.5 0-8.25 10.8-16.5 0z" fill="#fff"/><circle cx="14.75" cy="15.8" r="4" fill="#44b549"/><circle cx="14.75" cy="15.8" r="2.9" fill="#fff"/><circle cx="14.75" cy="15.8" r="1.9" fill="#44b549"/><circle cx="13.9" cy="14.9" r=".9" fill="#fff"/></svg></div>
<div class="ab" style="left:1746px;top:478.0px;background:#fab535"><svg width="30" height="30" viewBox="0 0 30 30"><circle cx="10.8" cy="15.9" r="2.7" fill="#fff"/><circle cx="18.6" cy="11.2" r="2.6" fill="#fff"/><circle cx="18.6" cy="20.2" r="2.6" fill="#fff"/><path d="M10.8 15.9l7.8-4.7M10.8 15.9l7.8 4.3" stroke="#fff" stroke-width="1.6"/></svg></div>
<div class="ab" style="left:1782px;top:478.0px;background:#eb5e60"><svg width="30" height="30" viewBox="0 0 30 30"><path d="M8.6 11.2h12.6M12.6 11.2V9.7h4.6v1.5" fill="none" stroke="#fff" stroke-width="1.5"/><path d="M10.3 12.6h9.2v8.6h-9.2z" fill="none" stroke="#fff" stroke-width="1.5"/><path d="M13.2 14v5.8M14.9 14v5.8M16.6 14v5.8" stroke="#fff" stroke-width="1"/></svg></div>
<div class="cb" style="left:345px;top:606px"></div>
<div class="pic picb" style="overflow:hidden;top:585.0px"><svg width="75" height="56" viewBox="0 0 75 56">
<rect width="75" height="56" fill="#7c8893"/>
<rect x="0" y="0" width="24" height="14" fill="#1f2227"/>
<path d="M24 0h51v20l-22 6-29-4z" fill="#9ea6ad"/>
<path d="M58 0h17v30l-10-8-7-12z" fill="#5e646b"/>
<path d="M0 20l10 0 4 24-14 2z" fill="#5b636a"/>
<path d="M12 26l40-2 6 28-42 4z" fill="#5f7d99"/>
<rect x="11" y="13" width="6" height="5" fill="#c8cdd2"/><rect x="13" y="21" width="6" height="6" fill="#d6d9dc"/>
<path d="M40 22l6-3 16 30-6 4z" fill="#1c1e22"/>
<path d="M48 20l6-2 14 30-6 4z" fill="#25282d"/>
<path d="M58 16l5-2 5 10-5 3z" fill="#2a2d31"/>
<path d="M62 22h13v8H64z" fill="#33373c"/>
<circle cx="52" cy="47" r="3" fill="#e0e2e4"/>
<rect x="0" y="40" width="12" height="6" fill="#2a2e33"/>
<g opacity=".75"><rect x="69.4" y="6.1" width="1.5" height="1.5" fill="#9aa3ab"/><rect x="22.6" y="46.9" width="2.5" height="2.5" fill="#2a2e33"/><rect x="23.6" y="34.0" width="1" height="1" fill="#9aa3ab"/><rect x="67.8" y="34.7" width="1.5" height="1.5" fill="#b8c0c8"/><rect x="46.6" y="34.4" width="2.5" height="2.5" fill="#b8c0c8"/><rect x="13.7" y="12.2" width="1.5" height="1.5" fill="#9aa3ab"/><rect x="28.8" y="6.9" width="1.5" height="1.5" fill="#b8c0c8"/><rect x="3.1" y="31.5" width="2" height="2" fill="#2a2e33"/><rect x="8.8" y="33.6" width="2" height="2" fill="#15171a"/><rect x="48.7" y="17.3" width="2.5" height="2.5" fill="#b8c0c8"/><rect x="29.2" y="20.6" width="2.5" height="2.5" fill="#15171a"/><rect x="13.4" y="0.2" width="2.5" height="2.5" fill="#9aa3ab"/><rect x="17.6" y="42.8" width="1.5" height="1.5" fill="#9aa3ab"/><rect x="60.8" y="22.4" width="1.5" height="1.5" fill="#2a2e33"/><rect x="26.9" y="20.5" width="1" height="1" fill="#9aa3ab"/><rect x="3.0" y="7.3" width="1" height="1" fill="#5d7a96"/><rect x="4.1" y="28.2" width="1.5" height="1.5" fill="#9aa3ab"/><rect x="1.9" y="3.7" width="1" height="1" fill="#15171a"/><rect x="14.5" y="55.0" width="2" height="2" fill="#9aa3ab"/><rect x="71.7" y="51.3" width="1.5" height="1.5" fill="#b8c0c8"/><rect x="4.9" y="19.7" width="1.5" height="1.5" fill="#5d7a96"/><rect x="24.3" y="34.4" width="1.5" height="1.5" fill="#9aa3ab"/><rect x="19.1" y="54.0" width="1.5" height="1.5" fill="#9aa3ab"/><rect x="44.4" y="34.5" width="2" height="2" fill="#b8c0c8"/><rect x="27.9" y="11.1" width="1.5" height="1.5" fill="#9aa3ab"/><rect x="47.7" y="15.6" width="2.5" height="2.5" fill="#5d7a96"/><rect x="12.7" y="44.0" width="1" height="1" fill="#2a2e33"/><rect x="47.7" y="20.1" width="1" height="1" fill="#9aa3ab"/><rect x="18.9" y="30.0" width="2" height="2" fill="#9aa3ab"/><rect x="19.9" y="55.5" width="1.5" height="1.5" fill="#15171a"/><rect x="27.0" y="42.8" width="1.5" height="1.5" fill="#9aa3ab"/><rect x="13.3" y="41.6" width="2" height="2" fill="#2a2e33"/><rect x="61.5" y="14.2" width="2" height="2" fill="#15171a"/><rect x="55.0" y="41.8" width="1.5" height="1.5" fill="#b8c0c8"/><rect x="21.8" y="35.0" width="2" height="2" fill="#9aa3ab"/><rect x="67.2" y="7.4" width="1" height="1" fill="#b8c0c8"/><rect x="1.7" y="0.1" width="2" height="2" fill="#5d7a96"/><rect x="8.0" y="20.0" width="2.5" height="2.5" fill="#b8c0c8"/><rect x="43.8" y="33.0" width="2" height="2" fill="#b8c0c8"/><rect x="46.8" y="26.6" width="1" height="1" fill="#b8c0c8"/><rect x="70.2" y="13.6" width="2.5" height="2.5" fill="#b8c0c8"/><rect x="7.2" y="35.7" width="2.5" height="2.5" fill="#5d7a96"/><rect x="60.9" y="54.2" width="2" height="2" fill="#2a2e33"/><rect x="44.6" y="32.4" width="2.5" height="2.5" fill="#15171a"/><rect x="18.6" y="50.6" width="1" height="1" fill="#2a2e33"/><rect x="39.9" y="22.7" width="1.5" height="1.5" fill="#b8c0c8"/><rect x="4.4" y="43.6" width="1.5" height="1.5" fill="#2a2e33"/><rect x="10.7" y="11.2" width="2.5" height="2.5" fill="#15171a"/><rect x="61.0" y="9.8" width="1" height="1" fill="#5d7a96"/><rect x="22.5" y="2.7" width="1" height="1" fill="#9aa3ab"/><rect x="28.1" y="24.5" width="1" height="1" fill="#9aa3ab"/><rect x="55.6" y="25.3" width="1" height="1" fill="#b8c0c8"/><rect x="19.6" y="36.1" width="2" height="2" fill="#2a2e33"/><rect x="66.8" y="51.8" width="1" height="1" fill="#5d7a96"/><rect x="19.9" y="31.0" width="2" height="2" fill="#9aa3ab"/><rect x="22.2" y="52.0" width="1" height="1" fill="#b8c0c8"/><rect x="66.0" y="0.9" width="1.5" height="1.5" fill="#5d7a96"/><rect x="63.1" y="11.4" width="2" height="2" fill="#b8c0c8"/><rect x="14.4" y="21.8" width="1.5" height="1.5" fill="#15171a"/><rect x="28.5" y="47.7" width="2.5" height="2.5" fill="#15171a"/><rect x="35.4" y="29.7" width="1" height="1" fill="#2a2e33"/><rect x="32.8" y="40.6" width="2" height="2" fill="#15171a"/><rect x="59.2" y="21.9" width="1" height="1" fill="#15171a"/><rect x="42.4" y="9.6" width="1" height="1" fill="#2a2e33"/><rect x="8.4" y="34.8" width="2" height="2" fill="#b8c0c8"/><rect x="73.3" y="39.2" width="1" height="1" fill="#2a2e33"/><rect x="10.4" y="36.0" width="1" height="1" fill="#2a2e33"/><rect x="55.3" y="3.7" width="2" height="2" fill="#15171a"/><rect x="14.9" y="53.5" width="1" height="1" fill="#15171a"/><rect x="66.0" y="42.3" width="1" height="1" fill="#9aa3ab"/><rect x="18.5" y="11.4" width="1" height="1" fill="#2a2e33"/><rect x="71.2" y="51.0" width="2" height="2" fill="#2a2e33"/><rect x="35.8" y="7.4" width="2" height="2" fill="#b8c0c8"/><rect x="23.9" y="23.7" width="2" height="2" fill="#2a2e33"/><rect x="19.3" y="15.8" width="2" height="2" fill="#5d7a96"/><rect x="57.7" y="33.7" width="2" height="2" fill="#9aa3ab"/><rect x="46.4" y="1.7" width="1" height="1" fill="#9aa3ab"/><rect x="32.7" y="43.3" width="2.5" height="2.5" fill="#5d7a96"/><rect x="52.8" y="30.1" width="1" height="1" fill="#b8c0c8"/><rect x="43.1" y="16.1" width="1" height="1" fill="#9aa3ab"/><rect x="39.3" y="16.1" width="1" height="1" fill="#2a2e33"/><rect x="26.1" y="5.4" width="2.5" height="2.5" fill="#b8c0c8"/><rect x="44.4" y="53.6" width="2" height="2" fill="#15171a"/><rect x="43.4" y="8.9" width="1.5" height="1.5" fill="#b8c0c8"/><rect x="37.4" y="6.2" width="2.5" height="2.5" fill="#2a2e33"/><rect x="59.1" y="39.0" width="2" height="2" fill="#2a2e33"/><rect x="26.7" y="22.5" width="1" height="1" fill="#9aa3ab"/><rect x="31.7" y="36.2" width="1.5" height="1.5" fill="#5d7a96"/><rect x="22.7" y="24.0" width="1.5" height="1.5" fill="#15171a"/><rect x="28.4" y="49.5" width="2.5" height="2.5" fill="#b8c0c8"/><rect x="9.5" y="33.3" width="1" height="1" fill="#15171a"/><rect x="26.1" y="18.3" width="2.5" height="2.5" fill="#b8c0c8"/><rect x="49.7" y="41.6" width="2.5" height="2.5" fill="#b8c0c8"/><rect x="32.9" y="43.3" width="1.5" height="1.5" fill="#15171a"/><rect x="9.5" y="25.9" width="1.5" height="1.5" fill="#b8c0c8"/><rect x="20.1" y="42.3" width="1.5" height="1.5" fill="#15171a"/><rect x="54.3" y="54.6" width="2" height="2" fill="#5d7a96"/><rect x="12.1" y="18.4" width="2" height="2" fill="#b8c0c8"/><rect x="73.1" y="40.8" width="1.5" height="1.5" fill="#2a2e33"/><rect x="72.2" y="5.7" width="1.5" height="1.5" fill="#9aa3ab"/><rect x="73.8" y="44.5" width="2.5" height="2.5" fill="#5d7a96"/><rect x="20.5" y="6.1" width="2" height="2" fill="#2a2e33"/><rect x="15.5" y="21.7" width="1" height="1" fill="#2a2e33"/><rect x="29.9" y="44.3" width="2" height="2" fill="#b8c0c8"/><rect x="34.7" y="7.9" width="2.5" height="2.5" fill="#15171a"/><rect x="0.4" y="13.6" width="2.5" height="2.5" fill="#9aa3ab"/><rect x="63.4" y="37.4" width="1.5" height="1.5" fill="#15171a"/><rect x="51.0" y="35.9" width="2.5" height="2.5" fill="#9aa3ab"/><rect x="23.5" y="35.2" width="2.5" height="2.5" fill="#2a2e33"/><rect x="18.2" y="22.4" width="2" height="2" fill="#b8c0c8"/><rect x="63.7" y="27.0" width="2.5" height="2.5" fill="#2a2e33"/><rect x="38.9" y="37.0" width="2" height="2" fill="#b8c0c8"/><rect x="58.4" y="21.8" width="1" height="1" fill="#9aa3ab"/><rect x="2.9" y="30.4" width="1.5" height="1.5" fill="#b8c0c8"/><rect x="38.9" y="5.7" width="2.5" height="2.5" fill="#15171a"/><rect x="40.6" y="40.2" width="1" height="1" fill="#15171a"/><rect x="47.9" y="46.4" width="2" height="2" fill="#15171a"/><rect x="30.8" y="53.1" width="1.5" height="1.5" fill="#b8c0c8"/><rect x="29.4" y="42.7" width="2" height="2" fill="#2a2e33"/><rect x="47.8" y="14.1" width="2.5" height="2.5" fill="#9aa3ab"/><rect x="4.6" y="4.2" width="2" height="2" fill="#9aa3ab"/><rect x="43.5" y="6.1" width="2.5" height="2.5" fill="#5d7a96"/><rect x="70.5" y="29.5" width="2.5" height="2.5" fill="#b8c0c8"/><rect x="34.7" y="9.2" width="1.5" height="1.5" fill="#2a2e33"/><rect x="35.2" y="31.5" width="1.5" height="1.5" fill="#b8c0c8"/><rect x="26.5" y="35.8" width="2.5" height="2.5" fill="#9aa3ab"/><rect x="74.7" y="42.6" width="2.5" height="2.5" fill="#b8c0c8"/><rect x="26.6" y="47.6" width="2.5" height="2.5" fill="#5d7a96"/><rect x="51.6" y="55.0" width="2.5" height="2.5" fill="#b8c0c8"/><rect x="0.2" y="40.4" width="2" height="2" fill="#5d7a96"/><rect x="18.4" y="16.9" width="2.5" height="2.5" fill="#9aa3ab"/><rect x="32.1" y="35.7" width="1.5" height="1.5" fill="#5d7a96"/><rect x="69.7" y="47.8" width="1" height="1" fill="#2a2e33"/><rect x="62.1" y="50.7" width="2" height="2" fill="#b8c0c8"/><rect x="47.5" y="0.8" width="1.5" height="1.5" fill="#2a2e33"/><rect x="71.4" y="36.7" width="1" height="1" fill="#5d7a96"/><rect x="43.4" y="47.8" width="2.5" height="2.5" fill="#b8c0c8"/><rect x="26.0" y="8.5" width="1.5" height="1.5" fill="#9aa3ab"/><rect x="45.7" y="38.5" width="2" height="2" fill="#2a2e33"/><rect x="14.8" y="38.8" width="1" height="1" fill="#15171a"/><rect x="55.6" y="24.6" width="1" height="1" fill="#2a2e33"/><rect x="19.8" y="13.1" width="2.5" height="2.5" fill="#b8c0c8"/><rect x="37.0" y="3.3" width="1.5" height="1.5" fill="#9aa3ab"/><rect x="52.5" y="13.8" width="1" height="1" fill="#b8c0c8"/><rect x="12.0" y="18.0" width="2.5" height="2.5" fill="#15171a"/><rect x="49.9" y="47.1" width="2.5" height="2.5" fill="#5d7a96"/><rect x="31.4" y="53.8" width="1.5" height="1.5" fill="#2a2e33"/><rect x="47.8" y="35.6" width="1" height="1" fill="#2a2e33"/><rect x="45.7" y="38.2" width="1" height="1" fill="#5d7a96"/><rect x="38.3" y="27.1" width="1" height="1" fill="#b8c0c8"/><rect x="16.0" y="23.3" width="2" height="2" fill="#b8c0c8"/><rect x="7.1" y="36.9" width="2.5" height="2.5" fill="#5d7a96"/><rect x="58.4" y="31.0" width="2" height="2" fill="#b8c0c8"/><rect x="32.6" y="23.7" width="1" height="1" fill="#15171a"/><rect x="62.0" y="16.4" width="2.5" height="2.5" fill="#9aa3ab"/><rect x="25.0" y="55.1" width="2" height="2" fill="#15171a"/><rect x="73.1" y="36.7" width="2" height="2" fill="#2a2e33"/><rect x="14.4" y="39.9" width="1" height="1" fill="#b8c0c8"/><rect x="58.8" y="2.2" width="2.5" height="2.5" fill="#15171a"/><rect x="40.9" y="2.8" width="1" height="1" fill="#5d7a96"/></g></svg></div>
<div class="tl nm" style="left:525px;top:569.5px">2016 new 4<br>layer High TG<br>pcba pcba<br>circuit board</div>
<div class="tl" style="left:670px;top:580.5px">1 Piece/Pieces<br>samples<br>available</div>
<div class="pr" style="left:815px;top:602.5px">$ 0.00</div>
<div class="tl" style="left:960px;top:580.5px">Double-Side<br>PCB<br><span class="more">更多(4)</span><svg width="9" height="6" viewBox="0 0 9 6" style="margin-left:1px;vertical-align:1px"><path d="M0 0h9L4.5 5z" fill="#3a8ae6"/></svg></div>
<div class="tl tm" style="left:1105px;top:591.5px">2018-05-02<br>13:36:03</div>
<div class="tl" style="left:1249px;top:602.5px">anli063</div>
<div class="tg" style="top:601.0px"></div>
<div class="ab" style="left:1637px;top:598.0px;background:#1e9deb"><svg width="30" height="30" viewBox="0 0 30 30"><path d="M16.5 10.5H10.8q-1.5 0-1.5 1.5v7.5q0 1.5 1.5 1.5h7.5q1.5 0 1.5-1.5v-2.2" fill="none" stroke="#fff" stroke-width="1.4"/><path d="M13.2 18.2l.9-3 6.2-6.2 2.1 2.1-6.2 6.2z" fill="none" stroke="#fff" stroke-width="1.3" stroke-linejoin="round"/></svg></div>
<div class="ab" style="left:1673px;top:598.0px;background:#1e9deb"><svg width="30" height="30" viewBox="0 0 30 30"><path d="M10 17V11.5l3-3h4v3" fill="none" stroke="#fff" stroke-width="1.5"/><path d="M13.5 21.5V15.5l3-3h4.5v9z" fill="none" stroke="#fff" stroke-width="1.5"/><path d="M10.5 11.5h3v-3M14 15.5h3v-3" fill="none" stroke="#fff" stroke-width="1.2"/></svg></div>
<div class="ab" style="left:1710px;top:598.0px;background:#44b549"><svg width="30" height="30" viewBox="0 0 30 30"><path d="M6.5 15.8q8.25-10.8 16.5 0-8.25 10.8-16.5 0z" fill="#fff"/><circle cx="14.75" cy="15.8" r="4" fill="#44b549"/><circle cx="14.75" cy="15.8" r="2.9" fill="#fff"/><circle cx="14.75" cy="15.8" r="1.9" fill="#44b549"/><circle cx="13.9" cy="14.9" r=".9" fill="#fff"/></svg></div>
<div class="ab" style="left:1746px;top:598.0px;background:#fab535"><svg width="30" height="30" viewBox="0 0 30 30"><circle cx="10.8" cy="15.9" r="2.7" fill="#fff"/><circle cx="18.6" cy="11.2" r="2.6" fill="#fff"/><circle cx="18.6" cy="20.2" r="2.6" fill="#fff"/><path d="M10.8 15.9l7.8-4.7M10.8 15.9l7.8 4.3" stroke="#fff" stroke-width="1.6"/></svg></div>
<div class="ab" style="left:1782px;top:598.0px;background:#eb5e60"><svg width="30" height="30" viewBox="0 0 30 30"><path d="M8.6 11.2h12.6M12.6 11.2V9.7h4.6v1.5" fill="none" stroke="#fff" stroke-width="1.5"/><path d="M10.3 12.6h9.2v8.6h-9.2z" fill="none" stroke="#fff" stroke-width="1.5"/><path d="M13.2 14v5.8M14.9 14v5.8M16.6 14v5.8" stroke="#fff" stroke-width="1"/></svg></div>
<div class="cb" style="left:345px;top:726px"></div>
<div class="pic picc" style="overflow:hidden;top:705.0px"><svg width="75" height="56" viewBox="0 0 75 56">
<rect width="75" height="56" fill="#a22a3f"/>
<path d="M0 0h50l-10 12-20 8L0 30z" fill="#d9a6ad"/>
<path d="M0 0h32l-8 10-14 6L0 18z" fill="#b7b4b6"/>
<g fill="#2b2b2e"><circle cx="18" cy="8" r="2"/><circle cx="24" cy="12" r="2"/><circle cx="8" cy="14" r="2"/><circle cx="30" cy="3" r="1.5"/><circle cx="6" cy="34" r="2"/></g>
<path d="M62 0h13v14l-8-4z" fill="#c98e98"/>
<path d="M42 12l22 22-18 18-22-22z" fill="#8d8a8e"/>
<g stroke="#3e3c40" stroke-width="1.6"><path d="M38 22l16 16M41 19l16 16M35 25l16 16M44 16l14 14"/></g>
<path d="M0 42h12v14H0z" fill="#2a2226"/>
<path d="M62 44h13v12H60z" fill="#d8b0b6"/>
<path d="M18 42l10-4 6 10-8 8H16z" fill="#807a7d"/>
<g opacity=".75"><rect x="0.5" y="10.6" width="1" height="1" fill="#2a2428"/><rect x="59.2" y="51.0" width="2.5" height="2.5" fill="#d9a0a8"/><rect x="46.3" y="35.1" width="1" height="1" fill="#8a2436"/><rect x="15.9" y="37.4" width="1.5" height="1.5" fill="#2a2428"/><rect x="7.6" y="10.2" width="2.5" height="2.5" fill="#e8c8cc"/><rect x="58.1" y="51.2" width="1" height="1" fill="#8a2436"/><rect x="27.7" y="46.1" width="2" height="2" fill="#c8ccd0"/><rect x="64.7" y="10.3" width="2" height="2" fill="#e8c8cc"/><rect x="1.5" y="31.7" width="1" height="1" fill="#d9a0a8"/><rect x="37.3" y="29.2" width="2.5" height="2.5" fill="#e8c8cc"/><rect x="43.1" y="51.4" width="1" height="1" fill="#2a2428"/><rect x="1.1" y="21.7" width="1.5" height="1.5" fill="#d9a0a8"/><rect x="35.7" y="23.1" width="1" height="1" fill="#e8c8cc"/><rect x="48.3" y="11.9" width="1" height="1" fill="#6a1a2a"/><rect x="32.0" y="0.5" width="1" height="1" fill="#8a2436"/><rect x="74.0" y="48.1" width="1" height="1" fill="#6a1a2a"/><rect x="9.7" y="1.0" width="1.5" height="1.5" fill="#8a2436"/><rect x="33.8" y="41.7" width="2" height="2" fill="#e8c8cc"/><rect x="58.1" y="40.0" width="1" height="1" fill="#6a1a2a"/><rect x="22.0" y="31.2" width="2.5" height="2.5" fill="#2a2428"/><rect x="50.2" y="49.8" width="1" height="1" fill="#e8c8cc"/><rect x="0.9" y="0.8" width="1" height="1" fill="#8a2436"/><rect x="29.2" y="17.5" width="1.5" height="1.5" fill="#d9a0a8"/><rect x="71.8" y="46.8" width="1" height="1" fill="#d9a0a8"/><rect x="23.7" y="53.1" width="2.5" height="2.5" fill="#8a2436"/><rect x="35.2" y="9.3" width="2" height="2" fill="#e8c8cc"/><rect x="71.5" y="9.2" width="2.5" height="2.5" fill="#2a2428"/><rect x="28.9" y="44.0" width="2" height="2" fill="#c8ccd0"/><rect x="21.9" y="3.4" width="2" height="2" fill="#8a2436"/><rect x="65.2" y="40.6" width="1.5" height="1.5" fill="#e8c8cc"/><rect x="45.1" y="17.3" width="1.5" height="1.5" fill="#2a2428"/><rect x="28.3" y="38.4" width="1.5" height="1.5" fill="#d9a0a8"/><rect x="60.6" y="15.9" width="2" height="2" fill="#e8c8cc"/><rect x="19.7" y="23.7" width="1" height="1" fill="#d9a0a8"/><rect x="21.6" y="7.9" width="1.5" height="1.5" fill="#d9a0a8"/><rect x="20.5" y="47.7" width="2.5" height="2.5" fill="#d9a0a8"/><rect x="26.0" y="4.8" width="2.5" height="2.5" fill="#d9a0a8"/><rect x="59.8" y="11.2" width="1.5" height="1.5" fill="#8a2436"/><rect x="23.2" y="3.2" width="2.5" height="2.5" fill="#2a2428"/><rect x="53.1" y="51.9" width="1" height="1" fill="#d9a0a8"/><rect x="59.4" y="25.7" width="2" height="2" fill="#e8c8cc"/><rect x="57.9" y="13.0" width="2" height="2" fill="#d9a0a8"/><rect x="66.4" y="29.2" width="1.5" height="1.5" fill="#2a2428"/><rect x="14.2" y="10.8" width="2" height="2" fill="#6a1a2a"/><rect x="27.2" y="31.6" width="1.5" height="1.5" fill="#2a2428"/><rect x="18.5" y="51.7" width="2" height="2" fill="#2a2428"/><rect x="65.0" y="20.8" width="1" height="1" fill="#2a2428"/><rect x="11.7" y="33.4" width="2" height="2" fill="#c8ccd0"/><rect x="39.0" y="1.2" width="1.5" height="1.5" fill="#e8c8cc"/><rect x="74.3" y="48.5" width="1.5" height="1.5" fill="#2a2428"/><rect x="19.6" y="43.6" width="1" height="1" fill="#2a2428"/><rect x="71.0" y="43.0" width="1.5" height="1.5" fill="#d9a0a8"/><rect x="19.0" y="2.1" width="1.5" height="1.5" fill="#6a1a2a"/><rect x="28.4" y="1.5" width="2" height="2" fill="#e8c8cc"/><rect x="65.3" y="25.7" width="2.5" height="2.5" fill="#e8c8cc"/><rect x="69.2" y="39.6" width="2" height="2" fill="#e8c8cc"/><rect x="23.9" y="13.1" width="2.5" height="2.5" fill="#e8c8cc"/><rect x="13.7" y="47.6" width="1.5" height="1.5" fill="#c8ccd0"/><rect x="74.4" y="12.4" width="2" height="2" fill="#e8c8cc"/><rect x="70.6" y="3.3" width="1" height="1" fill="#d9a0a8"/><rect x="62.8" y="2.6" width="2.5" height="2.5" fill="#d9a0a8"/><rect x="4.2" y="8.1" width="1.5" height="1.5" fill="#e8c8cc"/><rect x="50.8" y="16.7" width="2.5" height="2.5" fill="#d9a0a8"/><rect x="56.8" y="5.9" width="2" height="2" fill="#c8ccd0"/><rect x="19.3" y="7.0" width="2.5" height="2.5" fill="#2a2428"/><rect x="12.6" y="13.4" width="1" height="1" fill="#6a1a2a"/><rect x="35.1" y="51.1" width="1.5" height="1.5" fill="#e8c8cc"/><rect x="69.6" y="12.4" width="2" height="2" fill="#d9a0a8"/><rect x="66.7" y="7.8" width="1" height="1" fill="#2a2428"/><rect x="69.4" y="21.6" width="1" height="1" fill="#e8c8cc"/><rect x="33.9" y="19.0" width="2.5" height="2.5" fill="#6a1a2a"/><rect x="8.7" y="20.5" width="1.5" height="1.5" fill="#c8ccd0"/><rect x="55.2" y="10.1" width="1.5" height="1.5" fill="#2a2428"/><rect x="32.9" y="8.4" width="2.5" height="2.5" fill="#2a2428"/><rect x="18.5" y="1.4" width="2" height="2" fill="#d9a0a8"/><rect x="25.1" y="9.4" width="1" height="1" fill="#2a2428"/><rect x="23.9" y="50.6" width="1.5" height="1.5" fill="#e8c8cc"/><rect x="73.4" y="3.2" width="1.5" height="1.5" fill="#8a2436"/><rect x="42.0" y="46.8" width="2" height="2" fill="#e8c8cc"/><rect x="56.6" y="54.4" width="2" height="2" fill="#2a2428"/><rect x="74.9" y="51.8" width="2.5" height="2.5" fill="#e8c8cc"/><rect x="21.7" y="50.2" width="2" height="2" fill="#e8c8cc"/><rect x="10.8" y="35.8" width="2" height="2" fill="#2a2428"/><rect x="38.3" y="24.8" width="2" height="2" fill="#d9a0a8"/><rect x="13.9" y="24.4" width="1.5" height="1.5" fill="#2a2428"/><rect x="20.8" y="10.1" width="1.5" height="1.5" fill="#6a1a2a"/><rect x="53.4" y="11.0" width="1" height="1" fill="#e8c8cc"/><rect x="66.7" y="40.9" width="1.5" height="1.5" fill="#c8ccd0"/><rect x="15.5" y="34.3" width="1.5" height="1.5" fill="#8a2436"/><rect x="43.7" y="11.3" width="2.5" height="2.5" fill="#e8c8cc"/><rect x="63.1" y="51.3" width="2" height="2" fill="#d9a0a8"/><rect x="25.1" y="47.1" width="1" height="1" fill="#2a2428"/><rect x="1.2" y="51.0" width="1.5" height="1.5" fill="#2a2428"/><rect x="65.4" y="14.9" width="2" height="2" fill="#6a1a2a"/><rect x="2.8" y="39.3" width="1" height="1" fill="#d9a0a8"/><rect x="26.7" y="52.2" width="1" height="1" fill="#d9a0a8"/><rect x="9.1" y="40.0" width="2.5" height="2.5" fill="#c8ccd0"/><rect x="43.2" y="50.3" width="1" height="1" fill="#c8ccd0"/><rect x="71.6" y="27.7" width="1" height="1" fill="#d9a0a8"/><rect x="39.8" y="30.1" width="1.5" height="1.5" fill="#e8c8cc"/><rect x="72.6" y="12.5" width="1.5" height="1.5" fill="#6a1a2a"/><rect x="7.7" y="14.0" width="1" height="1" fill="#e8c8cc"/><rect x="7.2" y="39.1" width="2" height="2" fill="#6a1a2a"/><rect x="1.3" y="33.6" width="2.5" height="2.5" fill="#d9a0a8"/><rect x="39.2" y="39.3" width="2" height="2" fill="#e8c8cc"/><rect x="65.2" y="40.2" width="2" height="2" fill="#e8c8cc"/><rect x="9.2" y="27.6" width="2" height="2" fill="#d9a0a8"/><rect x="8.3" y="6.8" width="1.5" height="1.5" fill="#6a1a2a"/><rect x="64.6" y="8.2" width="2.5" height="2.5" fill="#d9a0a8"/><rect x="56.0" y="9.2" width="2.5" height="2.5" fill="#e8c8cc"/><rect x="52.0" y="33.4" width="1" height="1" fill="#d9a0a8"/><rect x="29.7" y="52.7" width="2" height="2" fill="#c8ccd0"/><rect x="30.1" y="47.0" width="2.5" height="2.5" fill="#8a2436"/><rect x="63.2" y="31.6" width="2.5" height="2.5" fill="#c8ccd0"/><rect x="63.6" y="3.0" width="1.5" height="1.5" fill="#d9a0a8"/><rect x="71.8" y="52.3" width="2.5" height="2.5" fill="#6a1a2a"/><rect x="49.7" y="0.6" width="1.5" height="1.5" fill="#e8c8cc"/><rect x="5.2" y="24.3" width="1" height="1" fill="#d9a0a8"/><rect x="16.9" y="23.6" width="2.5" height="2.5" fill="#2a2428"/><rect x="47.5" y="45.3" width="1" height="1" fill="#e8c8cc"/><rect x="64.9" y="34.8" width="2" height="2" fill="#8a2436"/><rect x="47.1" y="45.2" width="1" height="1" fill="#e8c8cc"/><rect x="18.8" y="29.1" width="1.5" height="1.5" fill="#2a2428"/><rect x="71.3" y="16.1" width="2" height="2" fill="#c8ccd0"/><rect x="48.6" y="6.7" width="2" height="2" fill="#d9a0a8"/><rect x="6.3" y="33.1" width="2.5" height="2.5" fill="#6a1a2a"/><rect x="9.3" y="7.4" width="2.5" height="2.5" fill="#c8ccd0"/><rect x="43.3" y="15.4" width="1" height="1" fill="#8a2436"/><rect x="55.5" y="16.1" width="1.5" height="1.5" fill="#2a2428"/><rect x="48.8" y="11.3" width="2" height="2" fill="#8a2436"/><rect x="34.6" y="30.7" width="2.5" height="2.5" fill="#d9a0a8"/><rect x="35.2" y="17.4" width="2" height="2" fill="#6a1a2a"/><rect x="16.6" y="28.7" width="2.5" height="2.5" fill="#2a2428"/><rect x="0.9" y="19.7" width="2" height="2" fill="#6a1a2a"/><rect x="41.7" y="27.5" width="1.5" height="1.5" fill="#c8ccd0"/><rect x="22.2" y="43.2" width="1" height="1" fill="#6a1a2a"/><rect x="45.4" y="19.5" width="1" height="1" fill="#8a2436"/><rect x="38.8" y="46.7" width="1" height="1" fill="#c8ccd0"/><rect x="39.1" y="55.4" width="1.5" height="1.5" fill="#8a2436"/><rect x="31.3" y="37.4" width="1.5" height="1.5" fill="#6a1a2a"/><rect x="46.2" y="47.6" width="1" height="1" fill="#d9a0a8"/><rect x="55.4" y="41.6" width="2" height="2" fill="#2a2428"/><rect x="58.9" y="39.7" width="1.5" height="1.5" fill="#8a2436"/><rect x="31.0" y="5.8" width="1" height="1" fill="#2a2428"/><rect x="37.3" y="53.9" width="1.5" height="1.5" fill="#d9a0a8"/><rect x="31.3" y="43.9" width="1" height="1" fill="#d9a0a8"/><rect x="28.5" y="25.3" width="2" height="2" fill="#2a2428"/><rect x="54.2" y="16.4" width="2.5" height="2.5" fill="#2a2428"/><rect x="48.6" y="0.4" width="2.5" height="2.5" fill="#8a2436"/><rect x="28.6" y="16.8" width="2" height="2" fill="#d9a0a8"/><rect x="60.2" y="24.4" width="1.5" height="1.5" fill="#2a2428"/><rect x="6.6" y="51.5" width="1.5" height="1.5" fill="#c8ccd0"/><rect x="71.9" y="11.4" width="1" height="1" fill="#2a2428"/><rect x="1.9" y="14.4" width="2" height="2" fill="#2a2428"/><rect x="69.0" y="43.3" width="2.5" height="2.5" fill="#d9a0a8"/><rect x="38.8" y="29.0" width="2.5" height="2.5" fill="#8a2436"/><rect x="29.2" y="20.0" width="2" height="2" fill="#d9a0a8"/><rect x="34.0" y="0.6" width="1.5" height="1.5" fill="#e8c8cc"/><rect x="7.4" y="21.0" width="1.5" height="1.5" fill="#2a2428"/><rect x="66.0" y="54.0" width="2.5" height="2.5" fill="#2a2428"/><rect x="33.0" y="35.0" width="2" height="2" fill="#d9a0a8"/><rect x="51.9" y="41.8" width="1.5" height="1.5" fill="#e8c8cc"/><rect x="27.2" y="20.5" width="2" height="2" fill="#e8c8cc"/><rect x="38.4" y="6.2" width="2" height="2" fill="#c8ccd0"/><rect x="61.5" y="55.5" width="1.5" height="1.5" fill="#2a2428"/><rect x="39.3" y="45.7" width="1.5" height="1.5" fill="#6a1a2a"/><rect x="30.9" y="3.4" width="1" height="1" fill="#d9a0a8"/><rect x="26.5" y="55.6" width="1" height="1" fill="#8a2436"/><rect x="51.9" y="0.6" width="2" height="2" fill="#e8c8cc"/><rect x="53.3" y="31.0" width="2.5" height="2.5" fill="#c8ccd0"/><rect x="63.2" y="32.8" width="1" height="1" fill="#8a2436"/><rect x="14.7" y="27.9" width="2" height="2" fill="#d9a0a8"/><rect x="65.3" y="50.2" width="1.5" height="1.5" fill="#d9a0a8"/><rect x="43.1" y="23.0" width="1.5" height="1.5" fill="#e8c8cc"/><rect x="11.8" y="42.5" width="1" height="1" fill="#e8c8cc"/><rect x="7.5" y="9.6" width="2.5" height="2.5" fill="#d9a0a8"/><rect x="61.7" y="34.3" width="1" height="1" fill="#e8c8cc"/><rect x="51.3" y="32.4" width="1.5" height="1.5" fill="#6a1a2a"/><rect x="26.5" y="9.5" width="1" height="1" fill="#c8ccd0"/><rect x="64.4" y="53.1" width="2" height="2" fill="#e8c8cc"/><rect x="14.4" y="34.9" width="1" height="1" fill="#e8c8cc"/><rect x="16.5" y="22.2" width="2.5" height="2.5" fill="#e8c8cc"/><rect x="4.1" y="13.3" width="1" height="1" fill="#6a1a2a"/><rect x="12.0" y="32.9" width="2" height="2" fill="#6a1a2a"/><rect x="0.5" y="48.6" width="2" height="2" fill="#2a2428"/><rect x="31.4" y="14.1" width="1" height="1" fill="#2a2428"/><rect x="18.2" y="21.8" width="1.5" height="1.5" fill="#8a2436"/><rect x="31.0" y="22.3" width="2.5" height="2.5" fill="#8a2436"/><rect x="1.7" y="48.6" width="1.5" height="1.5" fill="#e8c8cc"/><rect x="12.7" y="21.2" width="2" height="2" fill="#e8c8cc"/><rect x="29.7" y="20.3" width="2.5" height="2.5" fill="#c8ccd0"/><rect x="25.2" y="36.5" width="2.5" height="2.5" fill="#e8c8cc"/><rect x="61.9" y="19.7" width="2.5" height="2.5" fill="#6a1a2a"/><rect x="14.3" y="15.9" width="2.5" height="2.5" fill="#6a1a2a"/><rect x="2.6" y="37.2" width="1.5" height="1.5" fill="#c8ccd0"/><rect x="18.1" y="7.3" width="2" height="2" fill="#6a1a2a"/><rect x="40.9" y="44.1" width="2.5" height="2.5" fill="#d9a0a8"/><rect x="35.0" y="44.5" width="1.5" height="1.5" fill="#6a1a2a"/><rect x="27.6" y="12.1" width="2.5" height="2.5" fill="#2a2428"/><rect x="47.2" y="32.5" width="2.5" height="2.5" fill="#c8ccd0"/></g></svg></div>
<div class="tl nm" style="left:525px;top:678.5px">16 years<br>experience 6<br>layer pcb board<br>maker circuit<br>board pcb</div>
<div class="tl" style="left:670px;top:700.5px">1 Piece/Pieces<br>samples<br>available</div>
<div class="pr" style="left:815px;top:722.5px">$ 0.00</div>
<div class="tl" style="left:960px;top:700.5px">Double-Side<br>PCB<br><span class="more">更多(4)</span><svg width="9" height="6" viewBox="0 0 9 6" style="margin-left:1px;vertical-align:1px"><path d="M0 0h9L4.5 5z" fill="#3a8ae6"/></svg></div>
<div class="tl tm" style="left:1105px;top:711.5px">2018-05-02<br>13:34:03</div>
<div class="tl" style="left:1249px;top:722.5px">anli063</div>
<div class="tg" style="top:721.0px"></div>
<div class="ab" style="left:1637px;top:718.0px;background:#1e9deb"><svg width="30" height="30" viewBox="0 0 30 30"><path d="M16.5 10.5H10.8q-1.5 0-1.5 1.5v7.5q0 1.5 1.5 1.5h7.5q1.5 0 1.5-1.5v-2.2" fill="none" stroke="#fff" stroke-width="1.4"/><path d="M13.2 18.2l.9-3 6.2-6.2 2.1 2.1-6.2 6.2z" fill="none" stroke="#fff" stroke-width="1.3" stroke-linejoin="round"/></svg></div>
<div class="ab" style="left:1673px;top:718.0px;background:#1e9deb"><svg width="30" height="30" viewBox="0 0 30 30"><path d="M10 17V11.5l3-3h4v3" fill="none" stroke="#fff" stroke-width="1.5"/><path d="M13.5 21.5V15.5l3-3h4.5v9z" fill="none" stroke="#fff" stroke-width="1.5"/><path d="M10.5 11.5h3v-3M14 15.5h3v-3" fill="none" stroke="#fff" stroke-width="1.2"/></svg></div>
<div class="ab" style="left:1710px;top:718.0px;background:#44b549"><svg width="30" height="30" viewBox="0 0 30 30"><path d="M6.5 15.8q8.25-10.8 16.5 0-8.25 10.8-16.5 0z" fill="#fff"/><circle cx="14.75" cy="15.8" r="4" fill="#44b549"/><circle cx="14.75" cy="15.8" r="2.9" fill="#fff"/><circle cx="14.75" cy="15.8" r="1.9" fill="#44b549"/><circle cx="13.9" cy="14.9" r=".9" fill="#fff"/></svg></div>
<div class="ab" style="left:1746px;top:718.0px;background:#fab535"><svg width="30" height="30" viewBox="0 0 30 30"><circle cx="10.8" cy="15.9" r="2.7" fill="#fff"/><circle cx="18.6" cy="11.2" r="2.6" fill="#fff"/><circle cx="18.6" cy="20.2" r="2.6" fill="#fff"/><path d="M10.8 15.9l7.8-4.7M10.8 15.9l7.8 4.3" stroke="#fff" stroke-width="1.6"/></svg></div>
<div class="ab" style="left:1782px;top:718.0px;background:#eb5e60"><svg width="30" height="30" viewBox="0 0 30 30"><path d="M8.6 11.2h12.6M12.6 11.2V9.7h4.6v1.5" fill="none" stroke="#fff" stroke-width="1.5"/><path d="M10.3 12.6h9.2v8.6h-9.2z" fill="none" stroke="#fff" stroke-width="1.5"/><path d="M13.2 14v5.8M14.9 14v5.8M16.6 14v5.8" stroke="#fff" stroke-width="1"/></svg></div>
<div class="pic picd" style="overflow:hidden;top:825px"><svg width="75" height="12" viewBox="0 0 75 12">
<rect width="75" height="12" fill="#5a7090"/>
<rect x="0" y="0" width="30" height="12" fill="#6d737a"/>
<rect x="0" y="4" width="12" height="8" fill="#40454b"/>
<rect x="30" y="0" width="24" height="12" fill="#2f5788"/>
<rect x="54" y="0" width="21" height="12" fill="#9bb0c6"/>
<circle cx="65" cy="9" r="2.5" fill="#222"/>
<g opacity=".75"><rect x="37.9" y="2.7" width="1.5" height="1.5" fill="#10151c"/><rect x="70.7" y="12.0" width="2" height="2" fill="#10151c"/><rect x="40.1" y="4.8" width="1.5" height="1.5" fill="#c0d0e0"/><rect x="65.4" y="1.5" width="2" height="2" fill="#1a2433"/><rect x="55.2" y="9.2" width="1.5" height="1.5" fill="#1a2433"/><rect x="23.3" y="4.7" width="1.5" height="1.5" fill="#1a2433"/><rect x="58.2" y="2.8" width="1" height="1" fill="#c0d0e0"/><rect x="5.1" y="11.0" width="1.5" height="1.5" fill="#4a6a90"/><rect x="4.9" y="3.7" width="2" height="2" fill="#c0d0e0"/><rect x="9.5" y="8.6" width="2" height="2" fill="#4a6a90"/><rect x="30.3" y="10.9" width="2" height="2" fill="#c0d0e0"/><rect x="13.2" y="4.4" width="2.5" height="2.5" fill="#4a6a90"/><rect x="1.9" y="8.4" width="1.5" height="1.5" fill="#10151c"/><rect x="75.0" y="4.8" width="1.5" height="1.5" fill="#1a2433"/><rect x="21.9" y="3.3" width="1" height="1" fill="#c0d0e0"/><rect x="30.3" y="7.3" width="1.5" height="1.5" fill="#10151c"/><rect x="56.8" y="1.9" width="2" height="2" fill="#1a2433"/><rect x="47.2" y="11.3" width="2.5" height="2.5" fill="#c0d0e0"/><rect x="53.7" y="3.1" width="2" height="2" fill="#10151c"/><rect x="70.2" y="1.3" width="1" height="1" fill="#4a6a90"/><rect x="65.6" y="7.0" width="1.5" height="1.5" fill="#1a2433"/><rect x="51.1" y="0.4" width="1.5" height="1.5" fill="#4a6a90"/><rect x="58.3" y="4.1" width="2.5" height="2.5" fill="#1a2433"/><rect x="52.1" y="4.7" width="2" height="2" fill="#c0d0e0"/><rect x="39.5" y="4.2" width="2.5" height="2.5" fill="#10151c"/><rect x="69.8" y="8.3" width="1" height="1" fill="#10151c"/><rect x="50.7" y="2.5" width="2.5" height="2.5" fill="#c0d0e0"/><rect x="57.1" y="0.5" width="1.5" height="1.5" fill="#4a6a90"/><rect x="41.0" y="11.6" width="2" height="2" fill="#c0d0e0"/><rect x="18.7" y="0.7" width="2" height="2" fill="#4a6a90"/><rect x="30.9" y="2.4" width="1.5" height="1.5" fill="#4a6a90"/><rect x="10.2" y="8.5" width="1.5" height="1.5" fill="#10151c"/><rect x="52.9" y="0.1" width="1.5" height="1.5" fill="#10151c"/><rect x="70.2" y="4.2" width="1.5" height="1.5" fill="#4a6a90"/><rect x="66.4" y="1.7" width="2" height="2" fill="#c0d0e0"/><rect x="47.2" y="1.4" width="1.5" height="1.5" fill="#10151c"/><rect x="50.8" y="1.9" width="2.5" height="2.5" fill="#10151c"/><rect x="62.3" y="1.4" width="1" height="1" fill="#4a6a90"/><rect x="27.0" y="2.5" width="2" height="2" fill="#1a2433"/><rect x="22.8" y="1.3" width="2.5" height="2.5" fill="#4a6a90"/><rect x="72.2" y="1.9" width="2.5" height="2.5" fill="#10151c"/><rect x="42.7" y="3.5" width="1" height="1" fill="#1a2433"/><rect x="0.8" y="11.9" width="1" height="1" fill="#10151c"/><rect x="56.0" y="4.0" width="1" height="1" fill="#4a6a90"/><rect x="48.4" y="11.5" width="1.5" height="1.5" fill="#10151c"/><rect x="58.8" y="3.9" width="1" height="1" fill="#4a6a90"/><rect x="48.3" y="7.5" width="1.5" height="1.5" fill="#4a6a90"/><rect x="5.9" y="9.0" width="2.5" height="2.5" fill="#1a2433"/><rect x="63.0" y="3.6" width="1.5" height="1.5" fill="#c0d0e0"/><rect x="7.7" y="8.6" width="2" height="2" fill="#4a6a90"/></g></svg></div>
<div class="tl nm" style="left:525px;top:809.5px">2016 new</div>
<div class="tl" style="left:670px;top:820.5px">1 Piece/Pieces</div>

<div class="abs" style="left:269px;top:486px;width:29px;height:31.5px;background:#f9f9f9;border:1px solid #d3d3d3;border-radius:5px"></div>
<div class="abs" style="left:299px;top:480px;width:1px;height:45px;background:#e2e2e2"></div>
<svg class="abs" style="left:275px;top:492px" width="18" height="16" viewBox="0 0 18 16"><g fill="#9a9a9a"><rect x="0" y="1" width="18" height="2"/><rect x="6.4" y="5" width="11.6" height="1.8"/><rect x="6.4" y="9" width="11.6" height="1.8"/><path d="M0 8L4 5V11z"/><rect x="0" y="12.2" width="18" height="2.6"/></g></svg>
<div class="abs" style="left:1626px;top:461px;width:46px;height:73px;border:3px solid #f22b2b"></div>
<svg class="abs" style="left:0;top:0" width="1910" height="837"><path d="M1524.2 710.5 L1609 524.7 L1606.5 521.5 L1619.7 510 L1619.7 528.7 L1616.1 527.2 L1524.8 711 Z" fill="#f43434"/></svg>
</body></html>
